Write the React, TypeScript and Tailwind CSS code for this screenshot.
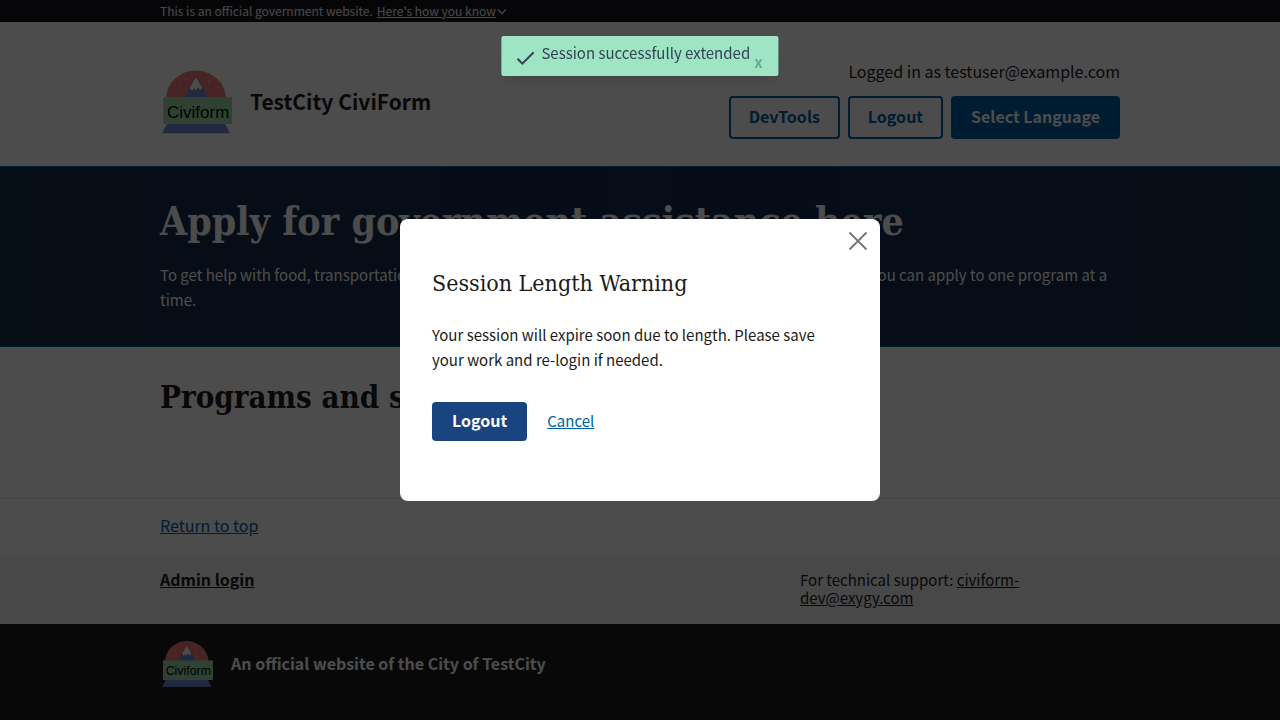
import React from "react";

const sans = "font-['Noto_Sans_CJK_JP',sans-serif]";
const serif = "font-['DejaVu_Serif_Condensed','DejaVu_Serif',serif]";

function Logo({ className }: { className: string }) {
  return (
    <svg viewBox="0 0 74 66" className={className} role="img" aria-label="Civiform">
      <path d="M6 30A30 28.5 0 0 1 66 30Z" fill="#f07c78" />
      <path d="M36 7.5L23.5 29H48.5Z" fill="#7189da" />
      <path
        d="M36 7.5L29.3 18.5L32 22.5L34.3 19.5L36 22.5L38 18.5L40 22L42.5 18.5Z"
        fill="#fff"
        stroke="#3c3c50"
        strokeWidth=".4"
      />
      <g fill="#fbc9c4">
        <circle cx="19.3" cy="13.7" r=".8" />
        <circle cx="26" cy="10.3" r=".8" />
        <circle cx="13" cy="21.7" r=".8" />
        <circle cx="22" cy="21" r=".8" />
        <circle cx="48.7" cy="12" r=".8" />
        <circle cx="57.7" cy="18.3" r=".8" />
        <circle cx="49.7" cy="22" r=".8" />
      </g>
      <path d="M7 55H65L70 64.3H2Z" fill="#7189da" />
      <rect x="3.3" y="28" width="68.7" height="27" fill="#9ad9ab" />
      <text x="7" y="48.5" fontSize="17" fill="#000" className="font-['Liberation_Sans',sans-serif]">
        Civiform
      </text>
    </svg>
  );
}

export default function App() {
  return (
    <div className={`${sans} min-h-screen bg-[#1b1b1b] text-[15px] leading-[25px] text-[#1b1b1b]`}>
      <section className="h-[22px] bg-[#14171c] text-[#f0f0f0]" aria-label="Official government website">
        <div className="mx-auto flex h-full max-w-[1024px] items-center gap-1 px-8 text-xs leading-4">
          <span>This is an official government website.</span>
          <button className="flex items-center">
            <span className="underline">Here's how you know</span>
            <svg viewBox="0 0 12 12" className="size-3" fill="none" stroke="currentColor" strokeWidth="1.3">
              <path d="M2 4.5L6 8.5L10 4.5" />
            </svg>
          </button>
        </div>
      </section>

      <header className="bg-white">
        <div className="mx-auto flex h-36 max-w-[1024px] items-center justify-between px-8">
          <a href="#home" className="flex items-center gap-4 pt-4">
            <Logo className="h-[66px] w-[74px]" />
            <span className="pb-0.5 text-[21px] leading-8 font-bold">TestCity CiviForm</span>
          </a>
          <div className="flex flex-col items-end gap-3 pt-[10px]">
            <p className="text-base leading-[25px]">Logged in as testuser@example.com</p>
            <div className="flex gap-2 text-base leading-[23px] font-bold">
              <button className="rounded border-2 border-[#005ea2] px-[18px] pt-[7px] pb-[9px] text-[#005ea2]">
                DevTools
              </button>
              <button className="rounded border-2 border-[#005ea2] px-[18px] pt-[7px] pb-[9px] text-[#005ea2]">
                Logout
              </button>
              <button className="rounded bg-[#005ea2] px-5 pt-[9px] pb-[11px] text-white">Select Language</button>
            </div>
          </div>
        </div>
      </header>

      <main>
        <section className="border-y border-[#005ea2] bg-linear-to-r from-[#162f48] via-[#142a50] to-[#162f48] text-white">
          <div className="mx-auto max-w-[1024px] px-8 pt-7 pb-[34px]">
            <h1 className={`${serif} mb-[15px] text-[39px] leading-[52px] font-bold`}>
              Apply for government assistance here
            </h1>
            <p>
              To get help with food, transportation, housing, and more, apply to programs by selecting some below. You
              can apply to one program at a time.
            </p>
          </div>
        </section>
        <section className="bg-white">
          <div className="mx-auto max-w-[1024px] px-8 pt-7 pb-[79px]">
            <h2 className={`${serif} text-[31px] leading-[44px] font-bold`}>Programs and services</h2>
          </div>
        </section>
      </main>

      <footer>
        <div className="border-t border-[#dfe1e2] bg-white">
          <div className="mx-auto max-w-[1024px] px-8 pt-[14px] pb-[17px]">
            <a href="#top" className="text-base leading-[25px] text-[#005ea2] underline">
              Return to top
            </a>
          </div>
        </div>
        <div className="bg-[#f0f0f0]">
          <div className="mx-auto grid max-w-[1024px] grid-cols-3 px-8 pt-4 pb-[17px] leading-[18px]">
            <a href="#admin" className="col-span-2 text-base leading-[17px] font-bold underline">
              Admin login
            </a>
            <p className="pr-16">
              For technical support:{" "}
              <a href="mailto:civiform-dev@exygy.com" className="underline">
                civiform-dev@exygy.com
              </a>
            </p>
          </div>
        </div>
        <div className="bg-[#1b1b1b] text-white">
          <div className="mx-auto flex max-w-[1024px] items-center gap-4 px-8 py-4">
            <Logo className="h-12 w-[55px]" />
            <span className="pb-0.5 text-base leading-6 font-bold">An official website of the City of TestCity</span>
          </div>
        </div>
      </footer>

      <div className="fixed inset-0 flex items-center justify-center bg-black/70">
        <div role="dialog" aria-modal="true" aria-labelledby="session-title" className="w-[480px] rounded-lg bg-white">
          <div className="flex justify-end px-3 pt-3">
            <button aria-label="Close this window" className="text-[#71767a]">
              <svg viewBox="0 0 20 20" className="size-5" fill="none" stroke="currentColor" strokeWidth="1.8">
                <path d="M1.5 1.5L18.5 18.5M18.5 1.5L1.5 18.5" />
              </svg>
            </button>
          </div>
          <div className="px-8 pt-4 pb-[60px]">
            <h2 id="session-title" className={`${serif} mb-[23px] text-[23px] leading-8`}>
              Session Length Warning
            </h2>
            <p>Your session will expire soon due to length. Please save your work and re-login if needed.</p>
            <div className="mt-[30px] flex items-center gap-5">
              <button className="rounded bg-[#1a4480] px-5 pt-[7px] pb-[9px] text-base leading-[23px] font-bold text-white">
                Logout
              </button>
              <button className="pb-0.5 leading-[23px] text-[#005ea2] underline">Cancel</button>
            </div>
          </div>
        </div>
      </div>

      <div
        role="status"
        className="fixed top-9 left-1/2 flex h-10 -translate-x-1/2 rounded-xs bg-[#9ee5c5] px-3 text-[#374151] shadow-lg"
      >
        <svg viewBox="0 0 24 24" className="mt-[10px] mr-1 size-6" fill="currentColor">
          <path d="M9 16.17L4.83 12l-1.42 1.41L9 19 21 7l-1.41-1.41z" />
        </svg>
        <span className="pt-[5px] leading-6 whitespace-nowrap">Session successfully extended</span>
        <button aria-label="Dismiss message" className="px-1 pt-3 leading-6 font-bold opacity-40">
          x
        </button>
      </div>
    </div>
  );
}
